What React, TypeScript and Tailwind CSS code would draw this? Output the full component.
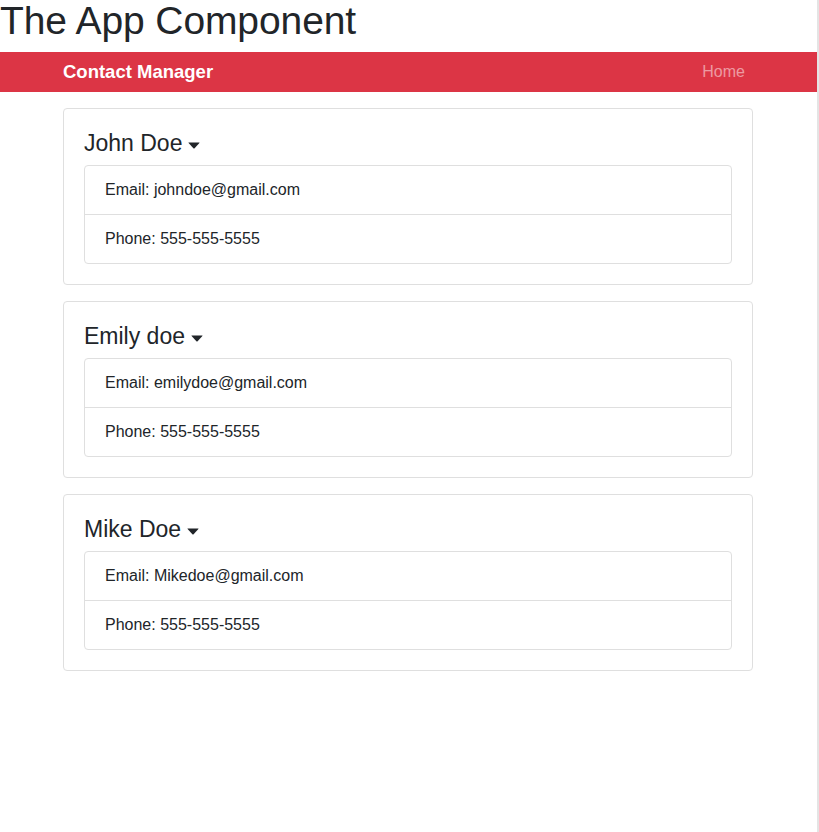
const contacts = [
  { id: 1, name: "John Doe", email: "johndoe@gmail.com", phone: "555-555-5555" },
  { id: 2, name: "Emily doe", email: "emilydoe@gmail.com", phone: "555-555-5555" },
  { id: 3, name: "Mike Doe", email: "Mikedoe@gmail.com", phone: "555-555-5555" },
]

function Caret() {
  return (
    <svg width="12" height="7" viewBox="0 0 12 7" className="ml-[6px] inline-block" aria-hidden="true">
      <path d="M0.8 0.5 H11.2 Q11.9 0.5 11.4 1.1 L6.6 6.2 Q6 6.8 5.4 6.2 L0.6 1.1 Q0.1 0.5 0.8 0.5 Z" fill="#212529" />
    </svg>
  )
}

function Contact({ name, email, phone }: { name: string; email: string; phone: string }) {
  return (
    <div className="mb-4 rounded border border-[#dfdfdf] bg-white p-5">
      <h4 className="mb-2 flex items-center text-[23px] leading-[28px] text-[#212529]">
        {name}
        <span className="mt-[5px] flex">
          <Caret />
        </span>
      </h4>
      <ul className="rounded border border-[#dfdfdf]">
        <li className="border-b border-[#dfdfdf] px-5 py-3 text-base leading-6 text-[#212529]">Email: {email}</li>
        <li className="px-5 py-3 text-base leading-6 text-[#212529]">Phone: {phone}</li>
      </ul>
    </div>
  )
}

function App() {
  return (
    <div className="flex min-h-screen bg-white font-['Liberation_Sans',Arial,sans-serif]">
      <div className="w-[817px]">
        <h1 className="mb-[10px] text-[39px] leading-[42px] tracking-[-0.1px] text-[#212529]">The App Component</h1>

        {/* Navbar */}
        <nav className="flex h-10 items-center bg-[#dc3545]">
          <div className="ml-[63px] flex w-[690px] items-center justify-between">
            <a href="#" className="text-[18.5px] font-semibold text-white">
              Contact Manager
            </a>
            <a href="#" className="pr-2 text-base text-white/50">
              Home
            </a>
          </div>
        </nav>

        {/* Contacts */}
        <div className="ml-[63px] mt-[16px] w-[690px]">
          {contacts.map((c) => (
            <Contact key={c.id} name={c.name} email={c.email} phone={c.phone} />
          ))}
        </div>
      </div>
      <div className="w-[2px] bg-[#e4e4e4]" />
    </div>
  )
}

export default App
